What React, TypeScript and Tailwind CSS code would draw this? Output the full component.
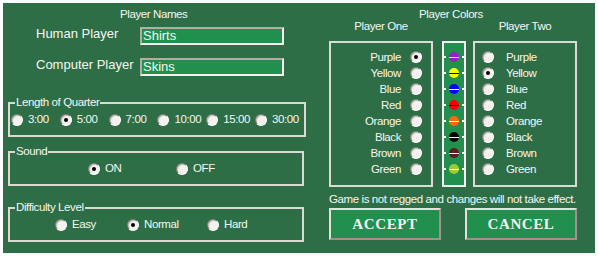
import React from 'react'

const SANS = "font-['Liberation_Sans',Arial,sans-serif]"

const COLORS = [
  { name: 'Purple', dot: 'bg-[#9a1ec8]', line: 'bg-[#f4c8f4]' },
  { name: 'Yellow', dot: 'bg-[#ffff00]', line: 'bg-[#000000]' },
  { name: 'Blue', dot: 'bg-[#0000ff]', line: 'bg-[#ffffff]' },
  { name: 'Red', dot: 'bg-[#ff0000]', line: 'bg-[#000000]' },
  { name: 'Orange', dot: 'bg-[#ff6a00]', line: 'bg-[#ffffff]' },
  { name: 'Black', dot: 'bg-[#000000]', line: 'bg-[#ffffff]' },
  { name: 'Brown', dot: 'bg-[#5c1e1e]', line: 'bg-[#ffffff]' },
  { name: 'Green', dot: 'bg-[#9ccc30]', line: 'bg-[#ffffff]' },
]

const QUARTERS = ['3:00', '5:00', '7:00', '10:00', '15:00', '30:00']

function Radio({ checked }: { checked?: boolean }) {
  return (
    <span className="flex h-[12px] w-[12px] shrink-0 items-center justify-center rounded-full border border-b-white border-l-[#7c7c74] border-r-white border-t-[#7c7c74] bg-[#f4f2ee] shadow-[inset_1px_1px_0_#c4c0b8]">
      {checked && <span className="h-[4px] w-[4px] rounded-full bg-black" />}
    </span>
  )
}

function Option({ label, checked, width }: { label: string; checked?: boolean; width: string }) {
  return (
    <div className={`flex items-center gap-[5px] ${width}`}>
      <Radio checked={checked} />
      <span className="text-[11.5px] leading-[13px] tracking-[-0.4px]">{label}</span>
    </div>
  )
}

function GroupBox({ title, className, children }: { title: string; className?: string; children: React.ReactNode }) {
  return (
    <fieldset className={`ml-[5px] h-[41px] w-[296px] border-2 border-[#dcdad2] ${className ?? ''}`}>
      <legend className="ml-[5px] px-[1px] text-[11.5px] leading-[13px] tracking-[-0.4px]">{title}</legend>
      <div className="mt-[4px] flex items-center">{children}</div>
    </fieldset>
  )
}

function NameInput({ value }: { value: string }) {
  return (
    <div className="flex h-[18px] w-[144px] items-center border-2 border-b-[#f2f2ee] border-l-[#b4aca4] border-r-[#f2f2ee] border-t-[#b4aca4] bg-[#21904f] pl-[1px] text-[13px] leading-[14px]">
      {value}
    </div>
  )
}

function PushButton({ label }: { label: string }) {
  return (
    <button
      type="button"
      className="flex h-[32px] w-[112px] items-center justify-center border-2 border-b-[#9c948c] border-l-[#e4e2dc] border-r-[#9c948c] border-t-[#e4e2dc] bg-[#21904f] font-['Liberation_Serif','Times_New_Roman',serif] text-[15px] font-bold leading-none tracking-[0.6px] text-[#f4f4f0]"
    >
      {label}
    </button>
  )
}

export default function App() {
  return (
    <div className="h-[256px] w-[598px] bg-white pl-[3px] pt-[3px]">
      <div className={`flex h-[250px] w-[592px] bg-[#2d6e46] text-[#f6f6f2] ${SANS}`}>
        {/* left column: names, quarter length, sound, difficulty */}
        <div className="flex w-[307px] shrink-0 flex-col">
          <div className="pl-[117px] pt-[5px] text-[11.5px] leading-[13px] tracking-[-0.4px]">Player Names</div>
          <div className="mt-[6px] flex items-start pl-[33px]">
            <span className="-mt-[1px] w-[104px] text-[13px] leading-[15px]">Human Player</span>
            <NameInput value="Shirts" />
          </div>
          <div className="mt-[13px] flex items-start pl-[33px]">
            <span className="-mt-[1px] w-[104px] text-[13px] leading-[15px]">Computer Player</span>
            <NameInput value="Skins" />
          </div>

          <GroupBox title="Length of Quarter" className="mt-[20px]">
            <div className="flex pl-[1px]">
              {QUARTERS.map((q) => (
                <Option key={q} label={q} checked={q === '5:00'} width="w-[48.8px]" />
              ))}
            </div>
          </GroupBox>

          <GroupBox title="Sound" className="mt-[8px]">
            <div className="flex pl-[78px]">
              <Option label="ON" checked width="w-[88px]" />
              <Option label="OFF" width="w-[60px]" />
            </div>
          </GroupBox>

          <GroupBox title="Difficulty Level" className="mt-[15px]">
            <div className="flex pl-[45px]">
              <Option label="Easy" width="w-[72px]" />
              <Option label="Normal" checked width="w-[80px]" />
              <Option label="Hard" width="w-[60px]" />
            </div>
          </GroupBox>
        </div>

        {/* right column: player colours and actions */}
        <div className="ml-[19px] flex w-[248px] flex-col pt-[5px] text-[11.5px] tracking-[-0.4px]">
          <div className="pr-[4px] text-center leading-[12px]">Player Colors</div>
          <div className="flex justify-between leading-[12px]">
            <span className="w-[104px] text-center">Player One</span>
            <span className="w-[104px] text-center">Player Two</span>
          </div>

          <div className="mt-[9px] flex h-[146px]">
            <div className="flex w-[104px] flex-col border-2 border-[#dcdad2] pr-[9px] pt-[6px]">
              {COLORS.map((c, i) => (
                <div key={c.name} className="flex h-[16px] items-center justify-end gap-[9px]">
                  <span className="leading-[13px]">{c.name}</span>
                  <Radio checked={i === 0} />
                </div>
              ))}
            </div>

            <div className="ml-[9px] flex w-[24px] flex-col border-2 border-[#f2f2ee] bg-[#21904f] pt-[6px]">
              {COLORS.map((c) => (
                <div key={c.name} className="flex h-[16px] items-center justify-between">
                  <span className="h-[2px] w-[2px] bg-white" />
                  <span className={`flex h-[10px] w-[10px] items-center rounded-full ${c.dot}`}>
                    <span className={`h-px w-full ${c.line}`} />
                  </span>
                  <span className="h-[2px] w-[2px] bg-white" />
                </div>
              ))}
            </div>

            <div className="ml-[7px] flex w-[104px] flex-col border-2 border-[#dcdad2] pl-[7px] pt-[6px]">
              {COLORS.map((c, i) => (
                <div key={c.name} className="flex h-[16px] items-center gap-[12px]">
                  <Radio checked={i === 1} />
                  <span className="leading-[13px]">{c.name}</span>
                </div>
              ))}
            </div>
          </div>

          <div className="mt-[5px] whitespace-nowrap leading-[14px]">
            Game is not regged and changes will not take effect.
          </div>

          <div className="mt-[2px] flex justify-between">
            <PushButton label="ACCEPT" />
            <PushButton label="CANCEL" />
          </div>
        </div>
      </div>
    </div>
  )
}
